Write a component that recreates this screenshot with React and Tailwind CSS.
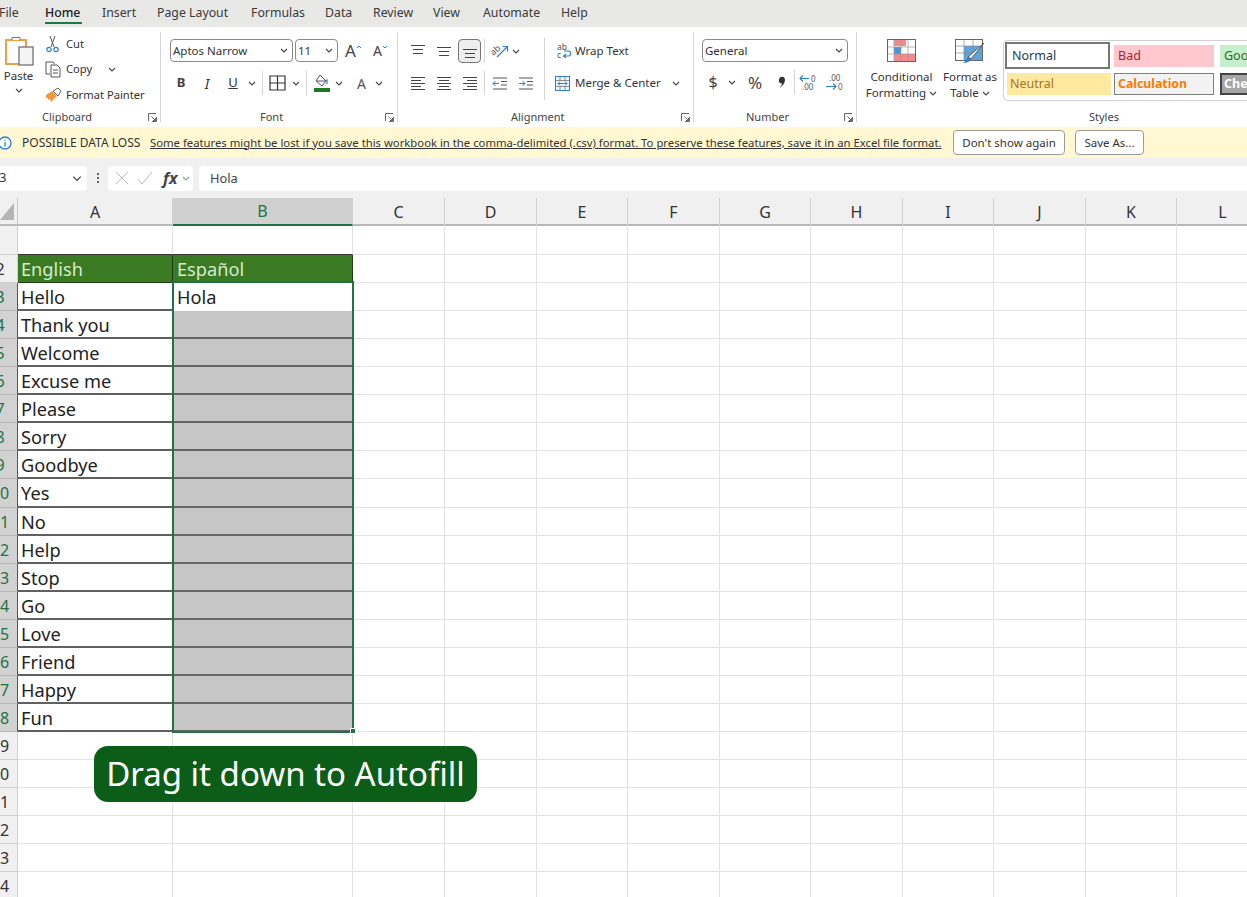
import React from "react";

const Chev = ({ c = "#444", cls = "" }) => (
  <svg width="8" height="5" viewBox="0 0 8 5" className={`shrink-0 ${cls}`}><path d="M1 1l3 3 3-3" fill="none" stroke={c} strokeWidth="1.1" /></svg>
);
const Launcher = () => (
  <svg width="9" height="9" viewBox="0 0 9 9" className="shrink-0"><path d="M.5 8V.5H8M8.500 4v4.500H4M3.500 3.500L7.500 7.500M7.500 5v2.500H5" fill="none" stroke="#666" strokeWidth="1" /></svg>
);
const Sep = ({ cls = "h-[24px] mx-[2px]" }) => <div className={`w-px bg-[#d4d4d4] shrink-0 ${cls}`} />;

const Lines = ({ rows }) => (
  <svg width="16" height="14" viewBox="0 0 16 14">
    {rows.map((r, i) => <path key={i} d={`M${r[1]} ${r[0]}.5H${r[2]}`} stroke="#444" strokeWidth="1" />)}
  </svg>
);
const vt = [[1, 1, 15], [5, 3, 13], [9, 3, 13]];
const vm = [[3, 1, 15], [7, 3, 13], [11, 3, 13]];
const vb = [[5, 1, 15], [9, 3, 13], [13, 3, 13]];
const al = [[1, 1, 15], [4, 1, 11], [7, 1, 15], [10, 1, 11], [13, 1, 15]];
const ac = [[1, 1, 15], [4, 3, 13], [7, 1, 15], [10, 3, 13], [13, 1, 15]];
const ar = [[1, 1, 15], [4, 5, 15], [7, 1, 15], [10, 5, 15], [13, 1, 15]];

const Box = ({ children, cls = "w-[26px]" }) => <div className={`h-[24px] flex items-center justify-center shrink-0 ${cls}`}>{children}</div>;

const Combo = ({ w, text, c = "pl-[2px] pr-[4px]" }) => (
  <div className={`h-[23px] border border-[#8a8a8a] rounded-[4px] bg-white flex items-center justify-between shrink-0 text-[11.5px] text-[#333] ${w} ${c}`}>
    <span className="whitespace-nowrap">{text}</span><Chev />
  </div>
);

const Label = ({ pl, text, launcher = true }) => (
  <div className={`h-[20px] flex items-center text-[11px] text-[#444] pr-[3px] ${pl}`}>
    <span className="whitespace-nowrap">{text}</span>
    {launcher && <span className="ml-auto"><Launcher /></span>}
  </div>
);

const tabs = ["Insert", "Page Layout", "Formulas", "Data", "Review", "View", "Automate", "Help"];
const colHeads = [
  ["A", "w-[155px]", false], ["B", "w-[180px]", true], ["C", "w-[92px]", false], ["D", "w-[92px]", false],
  ["E", "w-[91px]", false], ["F", "w-[92px]", false], ["G", "w-[91px]", false], ["H", "w-[92px]", false],
  ["I", "w-[91px]", false], ["J", "w-[92px]", false], ["K", "w-[91px]", false], ["L", "w-[92px]", false],
];
const restCols = colHeads.slice(2);
const words = ["Hello", "Thank you", "Welcome", "Excuse me", "Please", "Sorry", "Goodbye", "Yes", "No", "Help", "Stop", "Go", "Love", "Friend", "Happy", "Fun"];

function Row({ n }) {
  const w = n >= 3 && n <= 18 ? words[n - 3] : null;
  const head = n === 2;
  const sel = n >= 3 && n <= 18;
  return (
    <div className={`flex shrink-0 ${n === 1 || n === 10 ? "h-[29px]" : "h-[28px]"}`}>
      <div className={`w-[18px] shrink-0 border-r border-b overflow-hidden flex items-center text-[16px] leading-none ${sel ? "bg-[#d2d2d2] text-[#217346] border-b-[#b8b8b8] border-r-[#217346]" : "bg-[#f0f0f0] text-[#333] border-[#d0d0d0]"}`}>
        {n > 1 && <span className="-ml-[17px] w-[34px] text-center shrink-0">{n}</span>}
      </div>
      <div className={`w-[155px] shrink-0 flex items-center pl-[3px] text-[18.2px] ${head ? "pt-[2px] bg-[#3a7a22] text-[#d6ebce] border-r border-b border-[#1f3d14]" : w ? "pt-[3px] text-[#222] border-r border-b-2 border-[#606060]" : n === 1 ? "border-r border-r-[#e2e2e2] border-b border-b-[#333]" : "border-r border-b border-[#e2e2e2]"}`}>{head ? "English" : w}</div>
      <div className={`w-[180px] shrink-0 flex items-center pl-[4px] pt-[2px] text-[18.2px] ${head ? "bg-[#3a7a22] text-[#d6ebce] border-r border-b border-[#1f3d14]" : n === 3 ? "text-[#222]" : n > 3 && n <= 18 ? "bg-[#c6c6c6] border-b-2 border-[#666]" : n === 1 ? "border-r border-r-[#e2e2e2] border-b border-b-[#333]" : "border-r border-b border-[#e2e2e2]"}`}>{head ? "Español" : n === 3 ? "Hola" : ""}</div>
      {restCols.map((c) => <div key={c[0]} className={`shrink-0 border-r border-b border-[#e2e2e2] ${c[1]}`} />)}
    </div>
  );
}

export default function App() {
  const rows = Array.from({ length: 24 }, (_, i) => i + 1);
  return (
    <div className="w-[1247px] h-[897px] overflow-hidden flex flex-col bg-white relative font-['Noto_Sans','Open_Sans',sans-serif] text-[#333]">
      {/* tabs */}
      <div className="h-[27px] shrink-0 bg-[#e8e8e6] flex text-[12.3px] text-[#3a3a3a] leading-[25px]">
        <span className="-ml-[1px] w-[46px]">File</span>
        <span className="w-[37px] mr-[20px] h-[24px] border-b-2 border-[#1e7a45] text-[#222] font-medium whitespace-nowrap">Home</span>
        {tabs.map((t, i) => (
          <span key={t} className={`whitespace-nowrap ${["w-[55px]", "w-[94px]", "w-[74px]", "w-[48px]", "w-[60px]", "w-[50px]", "w-[78px]", "w-[40px]"][i]}`}>{t}</span>
        ))}
      </div>

      {/* ribbon */}
      <div className="h-[100px] shrink-0 bg-white flex">
        {/* Clipboard */}
        <div className="w-[160px] shrink-0 flex flex-col">
          <div className="h-[80px] flex">
            <div className="w-[45px] shrink-0 pt-[8px] flex flex-col items-center pr-[8px]">
              <svg width="30" height="32" viewBox="0 0 30 32">
                <rect x="2" y="5" width="20" height="24" fill="#fff" stroke="#e8a14a" strokeWidth="2" />
                <path d="M8 5V2.500h8V5" fill="#fff" stroke="#777" strokeWidth="1" />
                <rect x="15" y="12" width="14" height="18" fill="#f4f4f4" stroke="#666" strokeWidth="1.200" />
              </svg>
              <span className="text-[11.5px] leading-[16px] mt-[1px]">Paste</span>
              <Chev cls="mt-[4px]" />
            </div>
            <div className="flex flex-col pt-[5px] text-[11.2px]">
              <div className="h-[26px] flex items-center gap-[6px]">
                <svg width="15" height="18" viewBox="0 0 15 18"><path d="M5 1l4 11M10 1L6 12" stroke="#555" strokeWidth="1" fill="none" /><circle cx="4" cy="14.500" r="2.200" fill="none" stroke="#2f7fc8" strokeWidth="1.200" /><circle cx="11" cy="14.500" r="2.200" fill="none" stroke="#2f7fc8" strokeWidth="1.200" /></svg>
                <span>Cut</span>
              </div>
              <div className="h-[26px] flex items-center gap-[4px]">
                <svg width="17" height="17" viewBox="0 0 17 17"><path d="M5 13H1V1h7l1.500 2" fill="none" stroke="#555" strokeWidth="1" /><path d="M6 4h6l3 3v9H6zM8 9h5M8 12h5" fill="#fff" stroke="#555" strokeWidth="1" /></svg>
                <span>Copy</span>
                <Chev cls="ml-[12px]" />
              </div>
              <div className="h-[26px] flex items-center gap-[4px] pt-[1px]">
                <svg width="17" height="16" viewBox="0 0 17 16"><path d="M1 8l6-4 5 5-6 6-1-3-2 1 0-2-2 0z" fill="#ee9a3a" /><path d="M8 4l5-3 3 3-3 5z" fill="#fff" stroke="#666" strokeWidth="1" /></svg>
                <span className="whitespace-nowrap">Format Painter</span>
              </div>
            </div>
          </div>
          <Label pl="pl-[42px]" text="Clipboard" />
        </div>
        <Sep cls="h-[90px] mt-[5px]" />

        {/* Font */}
        <div className="w-[236px] shrink-0 flex flex-col">
          <div className="h-[80px] pl-[9px] flex flex-col">
            <div className="h-[47px] flex items-start pt-[12px] gap-[2px]">
              <Combo w="w-[123px]" text="Aptos Narrow" />
              <Combo w="w-[43px]" text="11" />
              <div className="flex items-center text-[#444] ml-[5px] h-[23px]">
                <span className="text-[17px] leading-none">A</span><svg width="6" height="4" viewBox="0 0 6 4" className="mb-[8px]"><path d="M1 3l2-2 2 2" fill="none" stroke="#2f7fc8" /></svg>
                <span className="text-[14px] leading-none ml-[11px]">A</span><svg width="6" height="4" viewBox="0 0 6 4" className="mb-[8px]"><path d="M1 1l2 2 2-2" fill="none" stroke="#2f7fc8" /></svg>
              </div>
            </div>
            <div className="flex items-center -ml-[2px] -mt-[3px]">
              <Box><b className="font-['Liberation_Sans'] text-[13px] text-[#444]">B</b></Box>
              <Box><i className="font-['Liberation_Serif'] text-[14px]">I</i></Box>
              <Box><u className="text-[13px]">U</u></Box>
              <Chev cls="ml-[2px]" />
              <Sep cls="h-[24px] ml-[6px] mr-[6px]" />
              <svg width="17" height="16" viewBox="0 0 17 16"><path d="M1 1h15v14H1zM8.500 1v14M1 8h15" fill="none" stroke="#333" strokeWidth="1.200" /></svg>
              <Chev cls="ml-[6px]" />
              <Sep cls="h-[24px] ml-[6px] mr-[7px]" />
              <svg width="16" height="18" viewBox="0 0 16 18"><path d="M6 1l6 6-4 5-6-5zM3 7h9" fill="none" stroke="#555" strokeWidth="1" /><path d="M13 10V6l-2 1" fill="none" stroke="#2f7fc8" strokeWidth="1.200" /><rect x="0" y="14" width="16" height="4" fill="#1f7a1f" /></svg>
              <Chev cls="ml-[5px]" />
              <span className="text-[14px] ml-[14px] text-[#555]">A</span>
              <Chev cls="ml-[9px]" />
            </div>
          </div>
          <Label pl="pl-[99px]" text="Font" />
        </div>
        <Sep cls="h-[90px] mt-[5px]" />

        {/* Alignment */}
        <div className="w-[295px] shrink-0 flex flex-col">
          <div className="h-[80px] flex pl-[7px]">
            <div className="w-[139px] shrink-0 flex flex-col pt-[12px]">
              <div className="h-[24px] flex items-center">
                <Box><Lines rows={vt} /></Box>
                <Box><Lines rows={vm} /></Box>
                <Box cls="w-[23px] ml-[1px] mr-[1px] border border-[#777] rounded-[4px] bg-[#eeeeee]"><Lines rows={vb} /></Box>
                <Sep />
                <Box>
                  <svg width="18" height="16" viewBox="0 0 18 16">
                    <text x="0" y="11" fontSize="9" fill="#555" transform="rotate(-40 4 9)" fontFamily="Noto Sans">ab</text>
                    <path d="M6 14L16 4M11.500 3.500h5v5" fill="none" stroke="#2f7fc8" strokeWidth="1.200" />
                  </svg>
                </Box>
                <Chev cls="-ml-[1px]" />
              </div>
              <div className="h-[24px] flex items-center mt-[8px]">
                <Box><Lines rows={al} /></Box>
                <Box><Lines rows={ac} /></Box>
                <Box cls="w-[23px] ml-[1px] mr-[1px]"><Lines rows={ar} /></Box>
                <Sep />
                <Box><svg width="16" height="13" viewBox="0 0 16 13"><path d="M1 1h14M9 4.500h6M9 8h6M1 12h14" stroke="#555" fill="none" /><path d="M7 6.500H1M3.500 4L1 6.500 3.500 9" stroke="#2f7fc8" fill="none" /></svg></Box>
                <Box><svg width="16" height="13" viewBox="0 0 16 13"><path d="M1 1h14M9 4.500h6M9 8h6M1 12h14" stroke="#555" fill="none" /><path d="M1 6.500h6M4.500 4L7 6.500 4.500 9" stroke="#2f7fc8" fill="none" /></svg></Box>
              </div>
            </div>
            <Sep cls="h-[62px] mt-[11px]" />
            <div className="flex flex-col pt-[12px] pl-[10px] text-[11.5px]">
              <div className="h-[24px] flex items-center gap-[3px] pl-[2px]">
                <svg width="15" height="17" viewBox="0 0 15 17">
                  <text x="0" y="7" fontSize="8.500" fill="#555" fontFamily="Noto Sans">ab</text>
                  <text x="0" y="15" fontSize="8.500" fill="#555" fontFamily="Noto Sans">c</text>
                  <path d="M7 13h4.500c3 0 3-5 0-5H7M9 11l-2.500 2L9 15" fill="none" stroke="#2f7fc8" strokeWidth="1.100" />
                </svg>
                <span>Wrap Text</span>
              </div>
              <div className="h-[24px] flex items-center gap-[5px] mt-[8px]">
                <svg width="15" height="15" viewBox="0 0 15 15"><rect x=".5" y=".5" width="14" height="14" fill="#eaf4fc" stroke="#2f7fc8" /><path d="M1 4.500h13M1 10.500h13M5 1v3.500M10 1v3.500M5 10.500V14M10 10.500V14" stroke="#777" strokeWidth=".8" fill="none" /><path d="M3 7.500h9M5 5.500l-2 2 2 2M10 5.500l2 2-2 2" fill="none" stroke="#2f7fc8" /></svg>
                <span className="whitespace-nowrap">Merge &amp; Center</span>
                <Chev cls="ml-[6px]" />
              </div>
            </div>
          </div>
          <Label pl="pl-[113px]" text="Alignment" />
        </div>
        <Sep cls="h-[90px] mt-[5px]" />

        {/* Number */}
        <div className="w-[162px] shrink-0 flex flex-col">
          <div className="h-[80px] pl-[8px] flex flex-col pt-[12px]">
            <Combo w="w-[146px]" text="General" />
            <div className="flex items-center mt-[8px] h-[24px] text-[#444]">
              <span className="w-[22px] text-center text-[16px]">$</span>
              <Chev cls="ml-[4px]" />
              <span className="w-[30px] ml-[4px] text-center text-[17px] leading-none">%</span>
              <Box cls="w-[22px] ml-[1px]">
                <svg width="9" height="13" viewBox="0 0 9 13"><path d="M2 1.500a3 3 0 0 1 5 2.500c0 3-2.500 6-5.500 8 1.500-2 2.500-3.500 2.500-4.500-2 0-3.500-1-3-3.500 0-1 .500-2 1-2.500z" fill="#333" /></svg>
              </Box>
              <Sep cls="h-[24px] ml-[1px]" />
              <Box cls="w-[26px] ml-[1px]">
                <svg width="20" height="17" viewBox="0 0 20 17">
                  <path d="M1 4.500h9M4 1.500l-3 3 3 3" fill="none" stroke="#2f7fc8" strokeWidth="1.100" />
                  <text x="12" y="8" fontSize="8" fill="#555" fontFamily="Noto Sans">0</text>
                  <text x="3" y="16" fontSize="8" fill="#555" fontFamily="Noto Sans">.00</text>
                </svg>
              </Box>
              <Box>
                <svg width="20" height="17" viewBox="0 0 20 17">
                  <text x="4" y="7" fontSize="8" fill="#555" fontFamily="Noto Sans">.00</text>
                  <path d="M1 12.500h10M8 9.500l3 3-3 3" fill="none" stroke="#2f7fc8" strokeWidth="1.100" />
                  <text x="13" y="16" fontSize="8" fill="#555" fontFamily="Noto Sans">0</text>
                </svg>
              </Box>
            </div>
          </div>
          <Label pl="pl-[52px]" text="Number" />
        </div>
        <Sep cls="h-[90px] mt-[5px]" />

        {/* Styles */}
        <div className="flex-1 min-w-0 flex flex-col">
          <div className="h-[80px] flex">
            <div className="w-[87px] shrink-0 flex flex-col items-center text-[11.5px] leading-[16px] pt-[12px] pl-[2px]">
              <svg width="29" height="23" viewBox="0 0 29 23" className="mb-[7px]">
                <rect x=".5" y=".5" width="28" height="22" fill="#fff" stroke="#666" />
                <path d="M7 1h12v6H7zM7 15h21v7H7z" fill="#f58a8a" /><path d="M7 8h7v7H7z" fill="#4a98d8" />
                <path d="M7 1v21M14 1v21M21 1v21M1 8h27M1 15h27" stroke="#999" fill="none" strokeWidth=".7" />
              </svg>
              <span className="whitespace-nowrap">Conditional</span>
              <span className="whitespace-nowrap flex items-center gap-[3px]">Formatting <Chev /></span>
            </div>
            <div className="w-[52px] shrink-0 flex flex-col items-center text-[11.5px] leading-[16px] pt-[12px] mr-[7px]">
              <svg width="30" height="26" viewBox="0 0 30 26" className="mb-[4px]">
                <rect x=".5" y=".5" width="27" height="21" fill="#fff" stroke="#666" />
                <rect x="9" y="7" width="18" height="14" fill="#5aa5e0" />
                <path d="M9 1v21M18 1v21M1 7h27M1 14h27" stroke="#888" fill="none" strokeWidth=".7" />
                <path d="M29 4L16 20l-3-2z" fill="#fff" stroke="#555" />
                <path d="M13 18l3 2c-1 3-5 4-8 4 2-1 3-3 5-6z" fill="#2f7fc8" />
              </svg>
              <span className="whitespace-nowrap">Format as</span>
              <span className="whitespace-nowrap flex items-center gap-[3px]">Table <Chev /></span>
            </div>
            <div className="mt-[13px] h-[61px] w-[260px] shrink-0 border border-[#cfcfcf] rounded-l-[5px] border-r-0 bg-white pl-[1px] pt-[1px] grid grid-cols-[109px_106px_60px] grid-rows-[28px_28px] text-[12.5px] overflow-hidden">
              <div className="border-2 border-[#777] mr-[4px] h-[27px] flex items-center pl-[5px] pt-[1px] text-[#2a3a4a]">Normal</div>
              <div className="bg-[#ffc7ce] text-[#b02035] mt-[3px] h-[22px] mr-[6px] flex items-center pl-[4px]">Bad</div>
              <div className="bg-[#c6efce] text-[#2c6a2c] mt-[3px] h-[22px] flex items-center pl-[4px]">Good</div>
              <div className="bg-[#ffe9a0] text-[#a8741a] ml-[2px] mr-[3px] mt-[3px] h-[22px] flex items-center pl-[3px]">Neutral</div>
              <div className="bg-[#f2f2f2] border border-[#7f7f7f] text-[#fa7d00] font-bold mt-[3px] h-[22px] mr-[6px] flex items-center pl-[3px] text-[12.3px]">Calculation</div>
              <div className="bg-[#a5a5a5] border-2 border-[#444] text-white font-bold mt-[3px] h-[22px] flex items-center pl-[2px] overflow-hidden">Check</div>
            </div>
          </div>
          <Label pl="pl-[232px]" text="Styles" launcher={false} />
        </div>
      </div>

      {/* message bar */}
      <div className="h-[31px] shrink-0 bg-[#fff8d2] flex items-center text-[11.5px] text-[#333]">
        <svg width="14" height="14" viewBox="0 0 14 14" className="-ml-[2px] shrink-0"><circle cx="7" cy="7" r="6" fill="#fff" stroke="#2f7fc8" strokeWidth="1.300" /><path d="M7 6v4.500M7 3.500v1.200" stroke="#2f7fc8" strokeWidth="1.300" /></svg>
        <span className="ml-[10px] w-[128px] shrink-0 whitespace-nowrap text-[12px]">POSSIBLE DATA LOSS</span>
        <span className="underline w-[803px] shrink-0 whitespace-nowrap text-[11.3px] pt-[1px]">Some features might be lost if you save this workbook in the comma-delimited (.csv) format. To preserve these features, save it in an Excel file format.</span>
        <button className="w-[112px] shrink-0 h-[25px] border border-[#9a9a9a] rounded-[4px] bg-white whitespace-nowrap">Don't show again</button>
        <button className="w-[69px] shrink-0 h-[25px] ml-[10px] border border-[#9a9a9a] rounded-[4px] bg-white whitespace-nowrap">Save As...</button>
      </div>

      {/* formula bar */}
      <div className="h-[40px] shrink-0 bg-[#f0f0f0] flex items-center">
        <div className="w-[87px] h-[25px] bg-white rounded-r-[4px] flex items-center justify-between pr-[6px] pt-[1px] overflow-hidden text-[12.5px] shrink-0">
          <span className="-ml-[9px]">B3</span>
          <Chev cls="scale-125" />
        </div>
        <svg width="21" height="14" viewBox="0 0 21 14" className="shrink-0"><path d="M11 2v2M11 6v2M11 10v2" stroke="#555" strokeWidth="1.800" /></svg>
        <div className="w-[85px] h-[25px] bg-white rounded-[4px] flex items-center pl-[7px] shrink-0">
          <svg width="14" height="14" viewBox="0 0 14 14"><path d="M1 1l12 12M13 1L1 13" stroke="#bbb" fill="none" /></svg>
          <svg width="16" height="14" viewBox="0 0 16 14" className="ml-[8px]"><path d="M1 8l4 5L15 1" stroke="#bbb" fill="none" /></svg>
          <span className="font-['Liberation_Serif'] italic font-bold text-[16px] ml-[10px] leading-none text-[#444]">fx</span>
          <Chev c="#999" cls="ml-[4px]" />
        </div>
        <div className="flex-1 h-[25px] ml-[6px] bg-white rounded-l-[4px] flex items-center pl-[11px] pt-[1px] text-[12.8px] text-[#444]">Hola</div>
      </div>

      {/* column headers */}
      <div className="h-[28px] shrink-0 flex bg-[#f0f0f0] border-b-2 border-[#b8b8b8] text-[16px] text-[#333]">
        <div className="w-[18px] shrink-0 border-r border-[#c8c8c8] flex items-center">
          <svg width="15" height="20" viewBox="0 0 15 20"><path d="M14 2v17H0z" fill="#b5b5b5" /></svg>
        </div>
        {colHeads.map((c) => (
          <div key={c[0]} className={`shrink-0 h-[28px] flex items-center justify-center border-r border-[#d0d0d0] ${c[1]} ${c[2] ? "bg-[#d0d0d0] text-[#217346] border-b-2 border-b-[#217346]" : ""}`}>{c[0]}</div>
        ))}
      </div>

      {/* grid */}
      <div className="relative flex-1 min-h-0 overflow-hidden">
        {rows.map((n) => <Row key={n} n={n} />)}
        <div className="absolute left-[172px] top-[55px] w-[182px] h-[452px] border-2 border-[#217346] pointer-events-none" />
        <div className="absolute left-[350px] top-[502px] w-[6px] h-[6px] bg-[#217346] border border-white" />
        <div className="absolute left-[94px] top-[520px] w-[383px] h-[56px] rounded-[14px] bg-[#0b5d18] text-white flex items-center justify-center text-[33px] whitespace-nowrap">Drag it down to Autofill</div>
      </div>
    </div>
  );
}
